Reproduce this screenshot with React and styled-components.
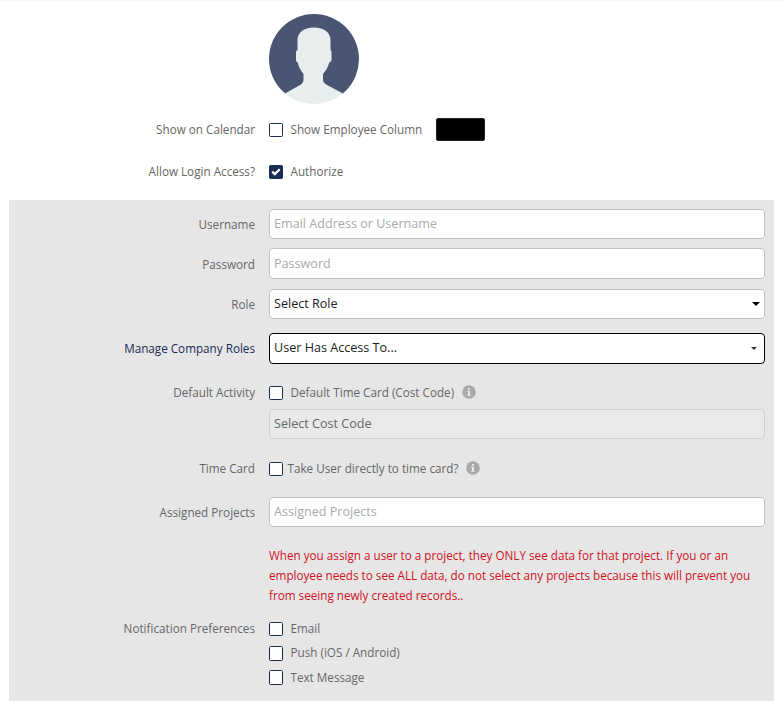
import styled, { createGlobalStyle } from "styled-components";

const GlobalStyle = createGlobalStyle`
  * {
    box-sizing: border-box;
  }

  body {
    margin: 0;
    background: #fff;
    font-family: "Open Sans", sans-serif;
    font-size: 11.7px;
    line-height: 20px;
    color: #666;
  }
`;

const Page = styled.main`
  width: 784px;
  height: 710px;
  padding: 0 10px 0 9px;
  border-top: 1px solid #f8f8f8;
`;

const Header = styled.section`
  height: 199px;
  padding-top: 13px;
`;

const Panel = styled.section`
  height: 501px;
  padding-top: 9px;
  background: #e6e6e6;
`;

const Row = styled.div`
  display: grid;
  grid-template-columns: 246px 496px;
  column-gap: 14px;
  margin-top: ${({ $top }) => $top || 0}px;
`;

const Label = styled.label`
  padding-top: ${({ $offset }) => $offset || 0}px;
  line-height: 18px;
  text-align: right;
  white-space: nowrap;
  color: ${({ $link }) => ($link ? "#1c2b54" : "#666")};
`;

const Avatar = styled.svg`
  display: block;
  grid-column: 2;
  width: 90px;
  height: 90px;
`;

const TextInput = styled.input`
  display: block;
  width: 100%;
  height: ${({ $height }) => $height || 30}px;
  padding: 0 4px ${({ $height }) => ($height ? 1 : 2)}px;
  border: 1px solid #c4c4c4;
  border-radius: 4px;
  background: #fff;
  font-family: inherit;
  font-size: 12.6px;
  outline: none;

  &::placeholder {
    color: #aaa;
    opacity: 1;
  }
`;

const SelectBox = styled.div`
  display: flex;
  align-items: center;
  justify-content: space-between;
  height: ${({ $height }) => $height || 30}px;
  margin-top: ${({ $top }) => $top || 0}px;
  padding: 0 4px ${({ $height }) => ($height ? 2 : 0)}px;
  border: 1px solid ${({ $active, $disabled }) => ($active ? "#000" : $disabled ? "#d0d0d0" : "#c4c4c4")};
  border-radius: 4px;
  background: ${({ $disabled }) => ($disabled ? "#e9e9e9" : "#fff")};
  color: ${({ $disabled }) => ($disabled ? "#666" : "#222")};
  font-size: 12.6px;
`;

const Caret = styled.svg`
  width: ${({ $small }) => ($small ? 6 : 8)}px;
  height: ${({ $small }) => ($small ? 3 : 4)}px;
  margin-right: ${({ $small }) => ($small ? 3 : 0.5)}px;
  margin-top: ${({ $small }) => ($small ? 2 : 0)}px;
  fill: ${({ $small }) => ($small ? "#333" : "#000")};
`;

const Option = styled.div`
  display: flex;
  align-items: center;
  height: 20px;
  white-space: nowrap;
`;

const OptionText = styled.span`
  margin-bottom: 2px;
`;

const Box = styled.span`
  display: flex;
  flex: none;
  width: 14px;
  height: ${({ $tall }) => ($tall ? 15 : 14)}px;
  margin-right: ${({ $gap }) => $gap || 7.5}px;
  border: 1px solid #1c2b54;
  border-radius: 1.5px;
  background: ${({ $checked }) => ($checked ? "#1c2b54" : "#fff")};
`;

const Swatch = styled.span`
  width: 49px;
  height: 23px;
  margin: 0 0 1px 13.5px;
  border: 1px solid #222;
  border-radius: 2px;
  background: #000;
`;

const Info = styled.svg`
  width: 14px;
  height: 14px;
  margin: -2px 0 0 7.5px;
`;

const Warning = styled.p`
  grid-column: 2;
  margin: 0;
  color: #d0121e;
  white-space: nowrap;
`;

const OptionList = styled.div`
  display: flex;
  flex-direction: column;
  gap: 4.3px;
`;

const InfoIcon = () => (
  <Info viewBox="0 0 14 14">
    <circle cx="7" cy="7" r="6.8" fill="#a9a9a9" />
    <path d="M6 3h2v1.7H6zM5.3 5.700H8v3.700h.8v1.300H5.200V9.400H6V7h-.7z" fill="#e9e9e9" />
  </Info>
);

const Checkbox = ({ label, checked, gap, tall, children }) => (
  <Option>
    <Box $checked={checked} $gap={gap} $tall={tall}>
      {checked && (
        <svg width="12" height="12" viewBox="0 0 12 12">
          <path d="M2.2 5.600l2.600 2.500 4.900-4.800" fill="none" stroke="#fff" strokeWidth="2.2" />
        </svg>
      )}
    </Box>
    <OptionText>{label}</OptionText>
    {children}
  </Option>
);

const Arrow = ({ small }) => (
  <Caret $small={small} viewBox="0 0 8 4" preserveAspectRatio="none">
    <path d="M0 0h8L4 4z" />
  </Caret>
);

export default function App() {
  return (
    <>
      <GlobalStyle />
      <Page>
        <Header>
          <Row>
            <Avatar viewBox="0 0 90 90">
              <clipPath id="avatar">
                <circle cx="45" cy="45" r="45" />
              </clipPath>
              <g clipPath="url(#avatar)">
                <path d="M0 0h90v80H0z" fill="#4a5574" />
                <path
                  d="M45 13.500c-10 0-16.500 5-16.500 12.500V36c-1 .5-1.500 1-1.500 2v8c0 1.500.8 2 1.700 2.500C29.500 53 32 57 34.500 60v5.500c0 2.500-1 4-3 5.200L16 79.500V91h58V79.500L58 71c-3-1.800-4-3-4-5.500V60c3-3.500 5.200-7 6.200-11.500 1.500-.5 2.300-1.300 2.300-2.500v-8c0-1-.3-1.500-1-2V26c0-7.500-6.500-12.500-16.500-12.500z"
                  fill="#e8eeee"
                />
              </g>
            </Avatar>
          </Row>
          <Row $top={16}>
            <Label>Show on Calendar</Label>
            <Checkbox label="Show Employee Column">
              <Swatch />
            </Checkbox>
          </Row>
          <Row $top={22}>
            <Label>Allow Login Access?</Label>
            <Checkbox label="Authorize" checked />
          </Row>
        </Header>
        <Panel>
          <Row>
            <Label $offset={6}>Username</Label>
            <TextInput placeholder="Email Address or Username" />
          </Row>
          <Row $top={9}>
            <Label $offset={7}>Password</Label>
            <TextInput $height={31} type="password" placeholder="Password" />
          </Row>
          <Row $top={10}>
            <Label $offset={6}>Role</Label>
            <SelectBox>
              Select Role
              <Arrow />
            </SelectBox>
          </Row>
          <Row $top={14}>
            <Label $offset={6} $link>Manage Company Roles</Label>
            <SelectBox $height={31} $active>
              User Has Access To...
              <Arrow small />
            </SelectBox>
          </Row>
          <Row $top={19}>
            <Label>Default Activity</Label>
            <div>
              <Checkbox label="Default Time Card (Cost Code)">
                <InfoIcon />
              </Checkbox>
              <SelectBox $top={6} $disabled>Select Cost Code</SelectBox>
            </div>
          </Row>
          <Row $top={20}>
            <Label>Time Card</Label>
            <Checkbox label="Take User directly to time card?" gap={4.5}>
              <InfoIcon />
            </Checkbox>
          </Row>
          <Row $top={18}>
            <Label $offset={6}>Assigned Projects</Label>
            <TextInput placeholder="Assigned Projects" />
          </Row>
          <Row $top={18}>
            <Warning>
              When you assign a user to a project, they ONLY see data for that project. If you or an
              <br />
              employee needs to see ALL data, do not select any projects because this will prevent you
              <br />
              from seeing newly created records..
            </Warning>
          </Row>
          <Row $top={14}>
            <Label>Notification Preferences</Label>
            <OptionList>
              <Checkbox label="Email" />
              <Checkbox label="Push (iOS / Android)" tall />
              <Checkbox label="Text Message" tall />
            </OptionList>
          </Row>
        </Panel>
      </Page>
    </>
  );
}
